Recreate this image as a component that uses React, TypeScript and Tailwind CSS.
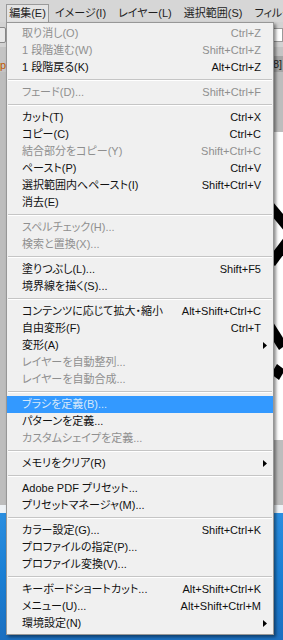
import React from 'react';

type Item =
  | { sep: true }
  | { label: string; shortcut?: string; disabled?: boolean; sub?: boolean; active?: boolean };

const items: Item[] = [
  { label: '取り消し(O)', shortcut: 'Ctrl+Z', disabled: true },
  { label: '1 段階進む(W)', shortcut: 'Shift+Ctrl+Z', disabled: true },
  { label: '1 段階戻る(K)', shortcut: 'Alt+Ctrl+Z' },
  { sep: true },
  { label: 'フェード(D)...', shortcut: 'Shift+Ctrl+F', disabled: true },
  { sep: true },
  { label: 'カット(T)', shortcut: 'Ctrl+X' },
  { label: 'コピー(C)', shortcut: 'Ctrl+C' },
  { label: '結合部分をコピー(Y)', shortcut: 'Shift+Ctrl+C', disabled: true },
  { label: 'ペースト(P)', shortcut: 'Ctrl+V' },
  { label: '選択範囲内へペースト(I)', shortcut: 'Shift+Ctrl+V' },
  { label: '消去(E)' },
  { sep: true },
  { label: 'スペルチェック(H)...', disabled: true },
  { label: '検索と置換(X)...', disabled: true },
  { sep: true },
  { label: '塗りつぶし(L)...', shortcut: 'Shift+F5' },
  { label: '境界線を描く(S)...' },
  { sep: true },
  { label: 'コンテンツに応じて拡大・縮小', shortcut: 'Alt+Shift+Ctrl+C' },
  { label: '自由変形(F)', shortcut: 'Ctrl+T' },
  { label: '変形(A)', sub: true },
  { label: 'レイヤーを自動整列...', disabled: true },
  { label: 'レイヤーを自動合成...', disabled: true },
  { sep: true },
  { label: 'ブラシを定義(B)...', active: true },
  { label: 'パターンを定義...' },
  { label: 'カスタムシェイプを定義...', disabled: true },
  { sep: true },
  { label: 'メモリをクリア(R)', sub: true },
  { sep: true },
  { label: 'Adobe PDF プリセット...' },
  { label: 'プリセットマネージャ(M)...' },
  { sep: true },
  { label: 'カラー設定(G)...', shortcut: 'Shift+Ctrl+K' },
  { label: 'プロファイルの指定(P)...' },
  { label: 'プロファイル変換(V)...' },
  { sep: true },
  { label: 'キーボードショートカット...', shortcut: 'Alt+Shift+Ctrl+K' },
  { label: 'メニュー(U)...', shortcut: 'Alt+Shift+Ctrl+M' },
  { label: '環境設定(N)', sub: true },
];

const Arrow = () => (
  <svg width="4" height="7" viewBox="0 0 4 7" className="absolute right-[6px] top-[5px]">
    <path d="M0 0 L4 3.5 L0 7 Z" fill="#000" />
  </svg>
);

const MenuRow = ({ item }: { item: Item }) => {
  if ('sep' in item) {
    return (
      <div className="mx-[1px] my-[3px] border-t border-b border-t-[#c5c5c5] border-b-white" />
    );
  }
  const color = item.active
    ? 'bg-[#3399ff] text-[#d6e8fa]'
    : item.disabled
      ? 'text-[#8f8f8f]'
      : 'text-[#111]';
  return (
    <div className={`relative flex h-[17px] items-center pl-[15px] pr-[12px] ${color}`}>
      <span className="flex-1 whitespace-nowrap">{item.label}</span>
      {item.shortcut && <span className="whitespace-nowrap">{item.shortcut}</span>}
      {item.sub && <Arrow />}
    </div>
  );
};

export default function App() {
  return (
    <div className="relative h-[640px] w-[283px] overflow-hidden bg-[#b9b9b9] font-['Liberation_Sans','Noto_Sans_CJK_JP',sans-serif] text-[11px] [font-feature-settings:'palt']">
      {/* menu bar */}
      <div className="flex h-[22px] items-end overflow-hidden bg-[#d6d6d6] pl-[6px] text-[11px] text-[#1e1e1e]">
        <div className="flex h-[18px] w-[43px] shrink-0 items-center justify-center whitespace-nowrap border border-b-0 border-[#9a9a9a] bg-[#e4e4e4]">
          編集(E)
        </div>
        <div className="ml-[6px] flex h-[18px] items-center gap-[12px] whitespace-nowrap">
          <span>イメージ(I)</span>
          <span>レイヤー(L)</span>
          <span>選択範囲(S)</span>
          <span>フィルタ</span>
        </div>
      </div>

      {/* options bar */}
      <div className="flex h-[25px] items-center justify-between bg-[#d2d2d2]">
        <div className="-ml-[4px] h-[16px] w-[10px] rounded-[2px] border border-[#8a8a8a] bg-[#e8e8e8]" />
        <div className="h-[14px] w-[60px] border border-[#9a9a9a] bg-white" />
      </div>

      {/* document tabs */}
      <div className="flex h-[25px] items-end justify-between bg-[#c4c4c4]">
        <div className="h-[14px] text-[11px] leading-[14px] text-[#c05a00]">p</div>
        <div className="h-[16px] w-[40px] bg-[#a5a5a5] pl-[30px] text-[11px] leading-[16px] text-[#222]">8]</div>
      </div>

      {/* workspace */}
      <div className="flex h-[433px] flex-col bg-[#bdbdbd]">
        <div className="ml-auto mt-[60px] h-[308px] w-[120px] overflow-hidden bg-white">
          <svg width="120" height="308" viewBox="0 0 120 308">
            <path d="M110 70 L130 94 L122 100 L104 78 Z" fill="#000" />
            <path d="M104 128 L122 104 L130 110 L112 134 Z" fill="#000" />
            <path d="M110 190 L124 212 L116 218 L102 196 Z" fill="#000" />
            <path d="M114 232 L122 238 L116 248 L108 242 Z" fill="#000" />
          </svg>
        </div>
      </div>

      {/* taskbar */}
      <div className="h-[8px] bg-[#eef2f6]" />
      <div className="h-[127px] bg-gradient-to-b from-[#2a8ee0] via-[#1a7fd4] to-[#1b6fc0]" />

      {/* dropdown menu */}
      <div className="absolute left-[6px] top-[22px] w-[268px] border border-[#979797] bg-[#f0f0f0] py-[2px] shadow-[2px_2px_3px_rgba(0,0,0,0.45)]">
        {items.map((it, i) => (
          <MenuRow key={i} item={it} />
        ))}
      </div>
    </div>
  );
}
